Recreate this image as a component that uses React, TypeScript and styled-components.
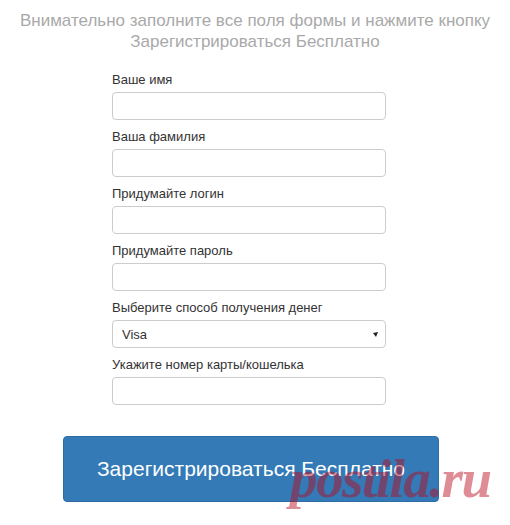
import React from 'react';
import styled, { createGlobalStyle } from 'styled-components';

const GlobalStyle = createGlobalStyle`
  html, body {
    margin: 0;
    padding: 0;
    background: #fff;
  }
  body {
    font-family: "Liberation Sans", Arial, sans-serif;
  }
`;

const Page = styled.div`
  position: relative;
  width: 510px;
  height: 525px;
  overflow: hidden;
  display: flex;
  flex-direction: column;
`;

const Intro = styled.p`
  margin: 0;
  padding-top: 10px;
  text-align: center;
  font-size: 17px;
  line-height: 21px;
  color: #a9a9a9;
`;

const Form = styled.form`
  margin: 19px 0 0 112px;
  width: 274px;
  display: flex;
  flex-direction: column;
  gap: 8px;
`;

const Field = styled.div`
  display: flex;
  flex-direction: column;
  gap: 3px;
`;

const Label = styled.label`
  font-size: 13px;
  line-height: 18px;
  color: #333;
`;

const Input = styled.input`
  box-sizing: border-box;
  width: 274px;
  height: 28px;
  margin: 0;
  padding: 0 8px;
  border: 1px solid #ccc;
  border-radius: 4px;
  background: #fff;
  font: 13px "Liberation Sans", Arial, sans-serif;
  outline: none;
`;

const Select = styled.div`
  box-sizing: border-box;
  width: 274px;
  height: 28px;
  padding: 0 7px 0 9px;
  border: 1px solid #ccc;
  border-radius: 4px;
  display: flex;
  align-items: center;
  justify-content: space-between;
  font-size: 13px;
  color: #333;
`;

const SubmitButton = styled.button`
  box-sizing: border-box;
  margin: 31px 0 0 63px;
  width: 376px;
  height: 66px;
  border: 1px solid #2e6da4;
  border-radius: 4px;
  background: #337ab7;
  color: #fff;
  font: 21px "Liberation Sans", Arial, sans-serif;
  cursor: pointer;
`;

// watermark of the source site, lying over the button
const Watermark = styled.span`
  position: absolute;
  left: 290px;
  top: 451px;
  font-family: "Liberation Serif", "Times New Roman", serif;
  font-style: italic;
  font-weight: 700;
  font-size: 55px;
  line-height: 1;
  letter-spacing: -1.5px;
  color: rgba(185, 10, 30, 0.47);
  pointer-events: none;
`;

const fields = [
  'Ваше имя',
  'Ваша фамилия',
  'Придумайте логин',
  'Придумайте пароль',
];

export default function App() {
  return (
    <Page>
      <GlobalStyle />
      <Intro>
        Внимательно заполните все поля формы и нажмите кнопку
        <br />
        Зарегистрироваться Бесплатно
      </Intro>
      <Form onSubmit={e => e.preventDefault()}>
        {fields.map(label => (
          <Field key={label}>
            <Label>{label}</Label>
            <Input type={label.includes('пароль') ? 'password' : 'text'} />
          </Field>
        ))}
        <Field>
          <Label>Выберите способ получения денег</Label>
          <Select>
            <span>Visa</span>
            <svg width="5" height="5" viewBox="0 0 5 5">
              <polygon points="0,1 5,0 3,5" fill="#222" />
            </svg>
          </Select>
        </Field>
        <Field>
          <Label>Укажите номер карты/кошелька</Label>
          <Input type="text" />
        </Field>
      </Form>
      <SubmitButton type="submit">Зарегистрироваться Бесплатно</SubmitButton>
      <Watermark>postila.ru</Watermark>
    </Page>
  );
}
